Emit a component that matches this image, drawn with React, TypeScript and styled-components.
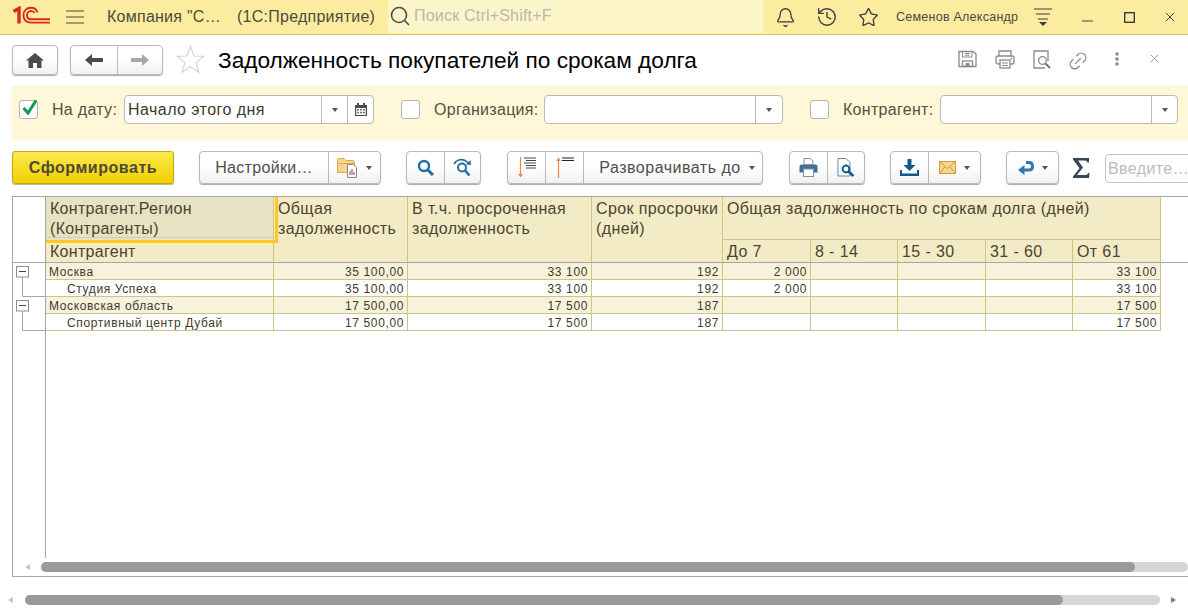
import React from 'react';
import styled, { createGlobalStyle } from 'styled-components';
import { Bell, History, Star, Link2, X } from 'lucide-react';

const GlobalStyle = createGlobalStyle`
  html, body {
    margin: 0;
    padding: 0;
    background: #fff;
    overflow: hidden;
  }
  * {
    box-sizing: border-box;
  }
`;

const Page = styled.div`
  width: 1188px;
  height: 608px;
  display: flex;
  flex-direction: column;
  overflow: hidden;
  background: #fff;
  font-family: 'Liberation Sans', Arial, sans-serif;
  color: #4a4436;
`;

/* top application bar */
const TopBar = styled.div`
  height: 35px;
  flex-shrink: 0;
  display: flex;
  align-items: center;
  background: #fbeca0;
  border-bottom: 1px solid #d6c468;
  padding-left: 13px;
  font-size: 16px;
  color: #4d4a3c;
`;

const TopText = styled.span<{ $w: number; $ml: number; $small?: boolean }>`
  width: ${({ $w }) => $w}px;
  margin-left: ${({ $ml }) => $ml}px;
  font-size: ${({ $small }) => ($small ? 12.5 : 16)}px;
  white-space: nowrap;
  letter-spacing: 0.25px;
`;

const GlobalSearch = styled.div`
  width: 375px;
  height: 33px;
  margin-left: 13px;
  margin-top: -2px;
  display: flex;
  align-items: center;
  gap: 3px;
  padding-left: 1px;
  background: #fdf5ca;
  border-radius: 4px 0 0 0;
  color: #b9b8ad;
  font-size: 16px;
  letter-spacing: 0.2px;
`;

const TopIcon = styled.span<{ $ml: number }>`
  display: flex;
  margin-left: ${({ $ml }) => $ml}px;
  color: #3d3d3d;
`;

/* form header */
const HeadRow = styled.div`
  height: 40px;
  margin-top: 10px;
  flex-shrink: 0;
  display: flex;
  align-items: flex-start;
  padding: 0 27px 0 12px;
`;

const Group = styled.div<{ $ml?: number }>`
  display: flex;
  flex-shrink: 0;
  margin-left: ${({ $ml }) => $ml ?? 0}px;
  border: 1px solid #b9b9b9;
  border-radius: 4px;
  background: linear-gradient(#ffffff 45%, #f0f0f0);
  box-shadow: 0 1px 1px #a8a8a8;
  overflow: hidden;
`;

const Btn = styled.div<{ $w: number; $h?: number; $pl?: number }>`
  width: ${({ $w }) => $w}px;
  height: ${({ $h }) => $h ?? 31}px;
  padding-left: ${({ $pl }) => $pl ?? 0}px;
  display: flex;
  align-items: center;
  justify-content: center;
  gap: 8px;
  font-size: 16px;
  color: #4e4e4e;
  letter-spacing: 0.3px;
  white-space: nowrap;
  & + & {
    border-left: 1px solid #b9b9b9;
  }
`;

const WideBtn = styled(Btn)`
  letter-spacing: 0.5px;
`;

const Title = styled.h1`
  margin: 2px 0 0 13px;
  font-size: 22.67px;
  line-height: 26px;
  font-weight: 400;
  color: #000;
  white-space: nowrap;
`;

const HeadTools = styled.div`
  margin: 5px 0 0 auto;
  display: flex;
  align-items: flex-start;
  color: #8a8a8a;
`;

const HeadIcon = styled.span<{ $ml: number; $mt?: number }>`
  display: flex;
  margin: ${({ $mt }) => $mt ?? 0}px 0 0 ${({ $ml }) => $ml}px;
`;

/* filter panel */
const FilterPanel = styled.div`
  height: 54px;
  margin-top: 1px;
  margin-left: 12px;
  flex-shrink: 0;
  display: flex;
  align-items: flex-start;
  padding: 9px 0 0 7px;
  background: #fef8d8;
`;

const Check = styled.div<{ $ml?: number }>`
  width: 19px;
  height: 19px;
  margin: 5px 0 0 ${({ $ml }) => $ml ?? 0}px;
  flex-shrink: 0;
  position: relative;
  background: #fff;
  border: 1px solid #b3b3b3;
  border-radius: 3px;
`;

const CheckMark = styled.svg`
  position: absolute;
  left: 1px;
  top: -3px;
`;

const Label = styled.span<{ $w: number }>`
  width: ${({ $w }) => $w}px;
  margin: 5px 0 0 14px;
  flex-shrink: 0;
  font-size: 16px;
  line-height: 19px;
  letter-spacing: 0.3px;
  color: #55503f;
  white-space: nowrap;
`;

const Field = styled.div<{ $w: number }>`
  width: ${({ $w }) => $w}px;
  height: 29px;
  flex-shrink: 0;
  display: flex;
  background: #fff;
  border: 1px solid #b9b9b9;
  border-radius: 4px;
  overflow: hidden;
`;

const FieldText = styled.div`
  flex: 1;
  padding-left: 3px;
  font-size: 16px;
  line-height: 27px;
  letter-spacing: 0.45px;
  color: #3f3a2c;
`;

const FieldBtn = styled.div<{ $w: number }>`
  width: ${({ $w }) => $w}px;
  display: flex;
  align-items: center;
  justify-content: center;
  border-left: 1px solid #b9b9b9;
`;

const Caret = styled.span`
  width: 0;
  height: 0;
  flex-shrink: 0;
  border-left: 3.5px solid transparent;
  border-right: 3.5px solid transparent;
  border-top: 4px solid #555;
`;

/* command bar */
const Toolbar = styled.div`
  height: 34px;
  margin-top: 11px;
  flex-shrink: 0;
  display: flex;
  align-items: flex-start;
  padding-left: 12px;
`;

const PrimaryBtn = styled.div`
  width: 162px;
  height: 33px;
  flex-shrink: 0;
  border: 1px solid #c3a80e;
  border-radius: 3px;
  background: linear-gradient(#fde84f, #f1d000);
  box-shadow: 0 1px 1px #b5b5a0;
  color: #4b4a34;
  font-size: 16px;
  font-weight: 700;
  line-height: 31px;
  text-align: center;
  letter-spacing: 0.55px;
`;

const SumSign = styled.span`
  display: flex;
  margin: 7px 0 0 14px;
`;

const QuickSearch = styled.div`
  width: 100px;
  height: 29px;
  margin: 3px 0 0 15px;
  flex-shrink: 0;
  padding-left: 2px;
  border: 1px solid #c4c4c4;
  border-radius: 4px;
  font-size: 16px;
  line-height: 27px;
  color: #bcbcbc;
  letter-spacing: 0.4px;
  white-space: nowrap;
`;

/* report table */
const TableBox = styled.div`
  height: 381px;
  margin: 11px 0 0 12px;
  flex-shrink: 0;
  display: flex;
  flex-direction: column;
  border-top: 1px solid #a6a6a6;
  border-left: 1px solid #a6a6a6;
  border-bottom: 1px solid #a6a6a6;
`;

const Grid = styled.div`
  display: grid;
  grid-template-columns: 33px 228px 134px 184px 131px 88px 87px 88px 87px 88px 1fr;
  grid-template-rows: 43px 23px repeat(4, 17px);
  flex-shrink: 0;
`;

const GutterHead = styled.div`
  grid-row: span 2;
  border-right: 1px solid #a6a6a6;
  border-bottom: 1px solid #a6a6a6;
`;

const HeadEnd = styled.div`
  grid-row: span 2;
  border-bottom: 1px solid #a6a6a6;
`;

const HeadCell = styled.div<{ $span?: number; $rows?: number }>`
  grid-column: span ${({ $span }) => $span ?? 1};
  grid-row: span ${({ $rows }) => $rows ?? 1};
  padding: 2px 0 0 4px;
  background: #f3ebc6;
  border-right: 1px solid #d0c384;
  border-bottom: 1px solid #d0c384;
  font-size: 16px;
  line-height: 20px;
  letter-spacing: 0.38px;
  color: #4a4531;
  white-space: nowrap;
`;

const BottomLined = styled(HeadCell)`
  border-bottom-color: #a6a6a6;
`;

const FirstHead = styled.div`
  grid-row: span 2;
  display: flex;
  flex-direction: column;
  background: #f3ebc6;
  border-right: 1px solid #d0c384;
  border-bottom: 1px solid #a6a6a6;
  font-size: 16px;
  line-height: 20px;
  letter-spacing: 0.3px;
  color: #4a4531;
`;

const RegionCell = styled.div`
  height: 45px;
  padding: 2px 0 0 4px;
  position: relative;
  z-index: 1;
  background: #e7e2c4;
  box-shadow: inset 0 -2px 0 #e7e2c4, inset 0 -3px 0 #d5cfa8;
  &::after {
    content: '';
    position: absolute;
    left: 0;
    right: -5px;
    top: 0;
    bottom: -3px;
    border-right: 3px solid #fcc821;
    border-bottom: 3px solid #fcc821;
  }
`;

const CounterpartyCell = styled.div`
  padding: 2px 0 0 4px;
`;

const Gutter = styled.div`
  position: relative;
  border-right: 1px solid #a6a6a6;
`;

const TreeSvg = styled.svg`
  position: absolute;
  left: 0;
  top: 0;
`;

const Cell = styled.div<{ $group?: boolean; $indent?: boolean; $num?: boolean }>`
  padding: 0 ${({ $num }) => ($num ? 3 : 0)}px 0 ${({ $indent }) => ($indent ? 21 : 3)}px;
  background: ${({ $group }) => ($group ? '#f7f2dc' : '#fff')};
  border-right: 1px solid #d0c384;
  border-bottom: 1px solid #d0c384;
  font-size: 12px;
  line-height: 18px;
  letter-spacing: 0.62px;
  text-align: ${({ $num }) => ($num ? 'right' : 'left')};
  color: #3f3a2a;
  white-space: nowrap;
`;

const Empty = styled.div``;

const TableRest = styled.div`
  flex: 1;
  min-height: 0;
  margin-left: 32px;
  border-left: 1px solid #a6a6a6;
`;

const ScrollRow = styled.div`
  height: 18px;
  flex-shrink: 0;
  display: flex;
  align-items: flex-start;
  padding-top: 4px;
`;

const ArrowLeft = styled.span<{ $ml: number; $w: number }>`
  width: ${({ $w }) => $w}px;
  margin-left: ${({ $ml }) => $ml}px;
  margin-top: 2px;
  flex-shrink: 0;
  &::before {
    content: '';
    display: block;
    width: 0;
    height: 0;
    border-top: 3px solid transparent;
    border-bottom: 3px solid transparent;
    border-right: 5px solid #c4c4c4;
  }
`;

const ArrowRight = styled.span`
  width: 0;
  height: 0;
  margin: 2px 0 0 11px;
  flex-shrink: 0;
  border-top: 3px solid transparent;
  border-bottom: 3px solid transparent;
  border-left: 5px solid #7d7d7d;
`;

const Track = styled.div<{ $w: number }>`
  width: ${({ $w }) => $w}px;
  height: 10px;
  flex-shrink: 0;
  background: #d6d6d6;
  border-radius: 5px;
`;

const Thumb = styled.div<{ $w: number }>`
  width: ${({ $w }) => $w}px;
  height: 10px;
  background: #9a9a9a;
  border-radius: 5px;
`;

const PageScroll = styled.div`
  margin-top: 18px;
  flex-shrink: 0;
  display: flex;
  align-items: flex-start;
`;

/* icons */
const Logo = () => (
  <svg width="38" height="22" viewBox="0 0 38 22" fill="none" stroke="#d9281e">
    <path d="M0.5 5.5 L6 2.5 L6 17.5" strokeWidth="3.4" />
    <path d="M24.5 6.5 C23.5 3.5 21 1.8 18 1.8 C13.5 1.8 10.5 5 10.5 9.5 C10.5 14 13.5 16.6 18 16.6 L37 16.6" strokeWidth="1.9" />
    <path d="M21.5 7 C21 5.8 19.6 5 18 5 C15.6 5 14 7 14 9.2 C14 11.6 15.6 13.2 18 13.2 L37 13.2" strokeWidth="1.9" />
  </svg>
);

const Burger = () => (
  <svg width="18" height="14" viewBox="0 0 18 14" stroke="#4b4b40" strokeWidth="1.2">
    <path d="M0 1h18M0 7h18M0 13h18" />
  </svg>
);

const Magnifier = () => (
  <svg width="22" height="22" viewBox="0 0 22 22" fill="none" stroke="#4a4a4a" strokeWidth="1.6">
    <circle cx="10" cy="10" r="7.5" />
    <path d="M15.5 15.5L20 20" />
  </svg>
);

const FilterLines = () => (
  <svg width="18" height="19" viewBox="0 0 18 19" stroke="#3d3d3d" strokeWidth="1.2">
    <path d="M0 1h18M2 6h14M4 11h10" />
    <path d="M5 14h8l-4 4z" fill="#3d3d3d" stroke="none" />
  </svg>
);

const Minimize = () => (
  <svg width="11" height="10" viewBox="0 0 11 10" stroke="#6a6a6a" strokeWidth="1.3">
    <path d="M0 9h11" />
  </svg>
);

const Maximize = () => (
  <svg width="11" height="11" viewBox="0 0 11 11" fill="none" stroke="#2f2f3a" strokeWidth="1.3">
    <rect x="0.7" y="0.7" width="9.6" height="9.6" />
  </svg>
);

const Home = () => (
  <svg width="18" height="15" viewBox="0 0 18 15" fill="#4b4b4b">
    <path d="M9 0L18 7.5H15.5V15H11V10H7V15H2.5V7.5H0z" />
  </svg>
);

const HArrow = ({ color, flip }: { color: string; flip?: boolean }) => (
  <svg width="18" height="12" viewBox="0 0 18 12" fill={color} style={flip ? { transform: 'scaleX(-1)' } : undefined}>
    <path d="M0 6L7 0V4H18V8H7V12z" />
  </svg>
);

const OutlineStar = () => (
  <svg width="29" height="29" viewBox="0 0 30 30" fill="#fff" stroke="#cfcfcf" strokeWidth="1.1" style={{ marginLeft: 13, flexShrink: 0 }}>
    <path d="M15 1.5L18.6 11.4L28.8 11.7L20.8 18.2L23.6 28.3L15 22.4L6.4 28.3L9.2 18.2L1.2 11.7L11.4 11.4z" />
  </svg>
);

const Save = () => (
  <svg width="19" height="18" viewBox="0 0 19 18" fill="none" stroke="#8a8a8a" strokeWidth="1.3">
    <path d="M1 1.5H15L18 4V16.5H1z" />
    <path d="M4.5 1.5V7H14V1.5M7 3.5H11.5M7 5.2H11.5" strokeWidth="1" />
    <rect x="4.5" y="11" width="10" height="5.5" />
    <rect x="7.5" y="13" width="4" height="3" fill="#8a8a8a" stroke="none" />
  </svg>
);

const PrinterGrey = () => (
  <svg width="20" height="19" viewBox="0 0 20 19" fill="none" stroke="#8a8a8a" strokeWidth="1.3">
    <path d="M4 6V1H16V6" />
    <rect x="1" y="6" width="18" height="8" rx="2" />
    <rect x="5" y="10" width="10" height="8" fill="#fff" />
    <path d="M7 13H13M7 15.5H13" strokeWidth="1" />
    <path d="M15.5 8.5H17" />
  </svg>
);

const PreviewGrey = () => (
  <svg width="19" height="19" viewBox="0 0 19 19" fill="none" stroke="#8a8a8a" strokeWidth="1.3">
    <path d="M15 11V1H1V18H12" />
    <circle cx="9.5" cy="10.5" r="3.8" />
    <path d="M12.5 13.5L17 18" strokeWidth="1.8" stroke="#6f6f6f" />
  </svg>
);

const Dots = () => (
  <svg width="4" height="14" viewBox="0 0 4 14" fill="#8a8a8a">
    <circle cx="2" cy="2" r="1.8" />
    <circle cx="2" cy="7" r="1.8" />
    <circle cx="2" cy="12" r="1.8" />
  </svg>
);

const Tick = () => (
  <CheckMark width="18" height="19" viewBox="0 0 18 19" fill="none" stroke="#109a50" strokeWidth="3">
    <path d="M2.5 10L7 15L15 2.5" />
  </CheckMark>
);

const Calendar = () => (
  <svg width="12" height="13" viewBox="0 0 12 13" fill="#4a4a4a">
    <path d="M0 2h2V0h2v2h4V0h2v2h2v11H0zM1.2 5v7h9.6V5z" />
    <path d="M2.2 6h1.6v1.4H2.2zM5.2 6h1.6v1.4H5.2zM8.2 6h1.6v1.4H8.2zM2.2 8.8h1.6v1.4H2.2zM5.2 8.8h1.6v1.4H5.2zM8.2 8.8h1.6v1.4H8.2z" />
  </svg>
);

const FolderChart = () => (
  <svg width="21" height="21" viewBox="0 0 21 21">
    <path d="M0.5 3.5Q0.5 1.5 2.5 1.5H7L9 3.5H15.5Q17.5 3.5 17.5 5.5V15.5H0.5z" fill="#f7d48f" stroke="#dba94e" />
    <path d="M0.5 6.5H17.5" stroke="#dba94e" />
    <path d="M10.5 7.5H16.5L19.5 10.5V20.5H10.5z" fill="#fff" stroke="#7d8b94" />
    <path d="M13 18V14" stroke="#3a9a55" strokeWidth="1.2" />
    <path d="M15 18V12" stroke="#d9483b" strokeWidth="1.2" />
    <path d="M17 18V15" stroke="#3a6fb0" strokeWidth="1.2" />
  </svg>
);

const SearchBlue = () => (
  <svg width="17" height="17" viewBox="0 0 17 17" fill="none" stroke="#1f6fa5" strokeWidth="2.4">
    <circle cx="7" cy="7" r="5" />
    <path d="M10.5 10.5L16 16" strokeWidth="3" />
  </svg>
);

const SearchAgain = () => (
  <svg width="19" height="19" viewBox="0 0 19 19" fill="none" stroke="#1f6fa5" strokeWidth="1.8">
    <circle cx="9" cy="9.5" r="4" strokeWidth="2" />
    <path d="M12 12.5L16.5 17.5" strokeWidth="2.6" />
    <path d="M1 6C3 2 8 0.5 12 2.5C14 3.4 15 4.5 15.5 6" />
    <path d="M13 6.5L18 7L17.5 2z" fill="#1f6fa5" stroke="none" />
  </svg>
);

const SortDown = () => (
  <svg width="18" height="21" viewBox="0 0 18 21" fill="none">
    <path d="M2.5 0V19" stroke="#ee8a44" strokeWidth="1.2" />
    <path d="M0 17H5L2.5 20.5z" fill="#ee8a44" />
    <path d="M6 1H18M8 3.5H18M6 6H18M8 8.5H18M8 11H18" stroke="#444" strokeWidth="1.1" />
  </svg>
);

const SortUp = () => (
  <svg width="18" height="21" viewBox="0 0 18 21" fill="none">
    <path d="M2.5 2V21" stroke="#ee8a44" strokeWidth="1.2" />
    <path d="M0 4H5L2.5 0.5z" fill="#ee8a44" />
    <path d="M6 1H18M6 3.5H18" stroke="#222" strokeWidth="1.2" />
  </svg>
);

const PrinterBlue = () => (
  <svg width="19" height="19" viewBox="0 0 19 19">
    <path d="M5 7V0.5H11.5L14 3V7z" fill="#fff" stroke="#7d93a5" />
    <path d="M2.5 6.5H16.5Q18.5 6.5 18.5 8.5V14.5H0.5V8.5Q0.5 6.5 2.5 6.5z" fill="#3f7199" />
    <rect x="4.5" y="11" width="10" height="7.5" fill="#fff" stroke="#7d93a5" />
  </svg>
);

const PreviewBlue = () => (
  <svg width="18" height="19" viewBox="0 0 18 19" fill="none">
    <path d="M1 0.5H9L13 4.5V18H1z" fill="#fff" stroke="#5f86a5" />
    <circle cx="9" cy="11" r="3.4" stroke="#135a8c" strokeWidth="2" />
    <path d="M11.5 13.5L16.5 18" stroke="#135a8c" strokeWidth="2.6" />
  </svg>
);

const Download = () => (
  <svg width="19" height="17" viewBox="0 0 19 17" fill="#135a8c">
    <path d="M7.5 0H11.5V6H15.5L9.5 12L3.5 6H7.5z" />
    <path d="M0 11H2V14.5H17V11H19V17H0z" />
  </svg>
);

const Mail = () => (
  <svg width="17" height="13" viewBox="0 0 17 13" fill="#f7d48f" stroke="#d49a3c">
    <rect x="0.5" y="0.5" width="16" height="12" />
    <path d="M0.5 0.5L8.5 7.5L16.5 0.5M0.5 12.5L6 5.5M16.5 12.5L11 5.5" fill="none" />
  </svg>
);

const Undo = () => (
  <svg width="16" height="14" viewBox="0 0 16 14" fill="none">
    <path d="M6 9H11Q14.5 9 14.5 5.2Q14.5 1.5 11 1.5H8" stroke="#2a79b5" strokeWidth="3" />
    <path d="M0 9L6.5 4V14z" fill="#2a79b5" />
  </svg>
);

const Sigma = () => (
  <svg width="17" height="20" viewBox="0 0 17 20" fill="#37475a">
    <path d="M0 0H16V4.5H14.5Q14 2.5 12 2.5H5L10 9.5L4 17H12.5Q14.5 17 15.2 15H16.5L16 20H0V18.6L6.5 10.2L0 1.4z" />
  </svg>
);

const TreeMark = () => (
  <TreeSvg width="32" height="34" viewBox="0 0 32 34">
    <rect x="3.5" y="3.5" width="12" height="10.5" fill="#fff" stroke="#8c8c8c" />
    <path d="M6 8.5H13" stroke="#444" />
    <path d="M9.5 14V33.5H32" fill="none" stroke="#a6a6a6" />
  </TreeSvg>
);

interface ReportRow {
  name: string;
  group: boolean;
  total: string;
  overdue: string;
  term: string;
  upTo7: string;
  from61: string;
}

const rows: ReportRow[] = [
  { name: 'Москва', group: true, total: '35 100,00', overdue: '33 100', term: '192', upTo7: '2 000', from61: '33 100' },
  { name: 'Студия Успеха', group: false, total: '35 100,00', overdue: '33 100', term: '192', upTo7: '2 000', from61: '33 100' },
  { name: 'Московская область', group: true, total: '17 500,00', overdue: '17 500', term: '187', upTo7: '', from61: '17 500' },
  { name: 'Спортивный центр Дубай', group: false, total: '17 500,00', overdue: '17 500', term: '187', upTo7: '', from61: '17 500' },
];

const App: React.FC = () => (
  <Page>
    <GlobalStyle />
    <TopBar>
      <Logo />
      <TopIcon $ml={15}><Burger /></TopIcon>
      <TopText $w={130} $ml={23}>Компания "С…</TopText>
      <TopText $w={138} $ml={0}>(1С:Предприятие)</TopText>
      <GlobalSearch>
        <Magnifier />
        Поиск Ctrl+Shift+F
      </GlobalSearch>
      <TopIcon $ml={12}><Bell size={21} strokeWidth={1.5} /></TopIcon>
      <TopIcon $ml={20}><History size={22} strokeWidth={1.5} /></TopIcon>
      <TopIcon $ml={20}><Star size={21} strokeWidth={1.5} /></TopIcon>
      <TopText $w={122} $ml={17} $small>Семенов Александр</TopText>
      <TopIcon $ml={16}><FilterLines /></TopIcon>
      <TopIcon $ml={30}><Minimize /></TopIcon>
      <TopIcon $ml={31}><Maximize /></TopIcon>
      <TopIcon $ml={27}><X size={16} strokeWidth={1.4} /></TopIcon>
    </TopBar>

    <HeadRow>
      <Group>
        <Btn $w={44} $h={28}><Home /></Btn>
      </Group>
      <Group $ml={12}>
        <Btn $w={46} $h={28}><HArrow color="#4b4b4b" /></Btn>
        <Btn $w={45} $h={28}><HArrow color="#a8a8a8" flip /></Btn>
      </Group>
      <OutlineStar />
      <Title>Задолженность покупателей по срокам долга</Title>
      <HeadTools>
        <HeadIcon $ml={0}><Save /></HeadIcon>
        <HeadIcon $ml={18}><PrinterGrey /></HeadIcon>
        <HeadIcon $ml={18}><PreviewGrey /></HeadIcon>
        <HeadIcon $ml={15}><Link2 size={22} strokeWidth={1.4} style={{ transform: 'rotate(-45deg)' }} /></HeadIcon>
        <HeadIcon $ml={26} $mt={2}><Dots /></HeadIcon>
        <HeadIcon $ml={29} $mt={2}><X size={13} strokeWidth={1.6} /></HeadIcon>
      </HeadTools>
    </HeadRow>

    <FilterPanel>
      <Check><Tick /></Check>
      <Label $w={72}>На дату:</Label>
      <Field $w={250}>
        <FieldText>Начало этого дня</FieldText>
        <FieldBtn $w={26}><Caret /></FieldBtn>
        <FieldBtn $w={26}><Calendar /></FieldBtn>
      </Field>
      <Check $ml={27} />
      <Label $w={110}>Организация:</Label>
      <Field $w={239}>
        <FieldText />
        <FieldBtn $w={27}><Caret /></FieldBtn>
      </Field>
      <Check $ml={27} />
      <Label $w={97}>Контрагент:</Label>
      <Field $w={238}>
        <FieldText />
        <FieldBtn $w={26}><Caret /></FieldBtn>
      </Field>
    </FilterPanel>

    <Toolbar>
      <PrimaryBtn>Сформировать</PrimaryBtn>
      <Group $ml={25}>
        <Btn $w={128}>Настройки…</Btn>
        <Btn $w={52}><FolderChart /><Caret /></Btn>
      </Group>
      <Group $ml={25}>
        <Btn $w={37}><SearchBlue /></Btn>
        <Btn $w={36}><SearchAgain /></Btn>
      </Group>
      <Group $ml={26}>
        <Btn $w={37}><SortDown /></Btn>
        <Btn $w={38}><SortUp /></Btn>
        <WideBtn $w={179} $pl={8}>Разворачивать до<Caret /></WideBtn>
      </Group>
      <Group $ml={26}>
        <Btn $w={37}><PrinterBlue /></Btn>
        <Btn $w={37}><PreviewBlue /></Btn>
      </Group>
      <Group $ml={25}>
        <Btn $w={37}><Download /></Btn>
        <Btn $w={52}><Mail /><Caret /></Btn>
      </Group>
      <Group $ml={25}>
        <Btn $w={51}><Undo /><Caret /></Btn>
      </Group>
      <SumSign><Sigma /></SumSign>
      <QuickSearch>Введите…</QuickSearch>
    </Toolbar>

    <TableBox>
      <Grid>
        <GutterHead />
        <FirstHead>
          <RegionCell>Контрагент.Регион<br />(Контрагенты)</RegionCell>
          <CounterpartyCell>Контрагент</CounterpartyCell>
        </FirstHead>
        <BottomLined $rows={2}>Общая<br />задолженность</BottomLined>
        <BottomLined $rows={2}>В т.ч. просроченная<br />задолженность</BottomLined>
        <BottomLined $rows={2}>Срок просрочки<br />(дней)</BottomLined>
        <HeadCell $span={5}>Общая задолженность по срокам долга (дней)</HeadCell>
        <HeadEnd />
        {['До 7', '8 - 14', '15 - 30', '31 - 60', 'От 61'].map((t) => (
          <BottomLined key={t}>{t}</BottomLined>
        ))}
        {rows.map((r) => (
          <React.Fragment key={r.name}>
            <Gutter>{r.group && <TreeMark />}</Gutter>
            <Cell $group={r.group} $indent={!r.group}>{r.name}</Cell>
            <Cell $group={r.group} $num>{r.total}</Cell>
            <Cell $group={r.group} $num>{r.overdue}</Cell>
            <Cell $group={r.group} $num>{r.term}</Cell>
            <Cell $group={r.group} $num>{r.upTo7}</Cell>
            <Cell $group={r.group} />
            <Cell $group={r.group} />
            <Cell $group={r.group} />
            <Cell $group={r.group} $num>{r.from61}</Cell>
            <Empty />
          </React.Fragment>
        ))}
      </Grid>
      <TableRest />
      <ScrollRow>
        <ArrowLeft $ml={12} $w={16} />
        <Track $w={1147}><Thumb $w={1094} /></Track>
      </ScrollRow>
    </TableBox>

    <PageScroll>
      <ArrowLeft $ml={8} $w={17} />
      <Track $w={1135}><Thumb $w={1038} /></Track>
      <ArrowRight />
    </PageScroll>
  </Page>
);

export default App;
